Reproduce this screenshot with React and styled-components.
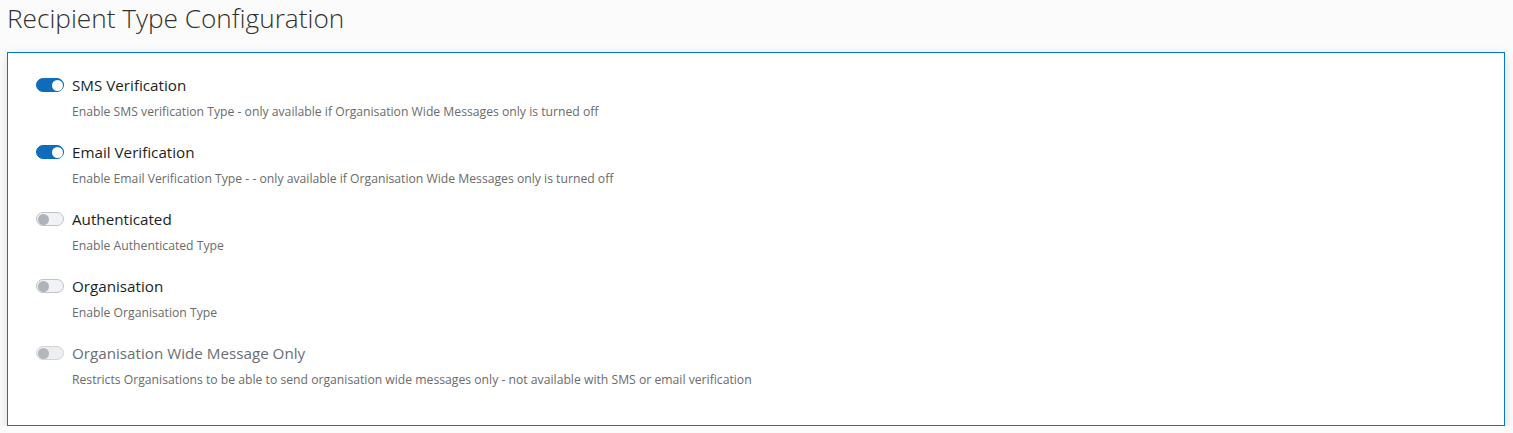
import React from "react";
import styled, { createGlobalStyle } from "styled-components";

const GlobalStyle = createGlobalStyle`
  html, body {
    margin: 0;
    padding: 0;
    background: #fbfbfb;
    font-family: "Open Sans", "Noto Sans", sans-serif;
  }
`;

const Page = styled.div`
  padding: 0 8px 0 7px;
`;

const Title = styled.h1`
  margin: 0;
  padding: 2px 0 0 0;
  height: 52px;
  box-sizing: border-box;
  font-size: 26.2px;
  font-weight: 300;
  color: #323130;
  line-height: 32px;
`;

const Card = styled.div`
  width: 1498px;
  height: 374px;
  box-sizing: border-box;
  background: #fff;
  border: 1px solid #0078d4;
  box-shadow: 0 3px 10px rgba(0, 0, 0, 0.13);
  padding: 22px 28px 24px;
  display: flex;
  flex-direction: column;
  gap: 21px;
`;

const Setting = styled.div`
  display: flex;
  flex-direction: column;
  gap: 8px;
`;

const Head = styled.div`
  display: flex;
  align-items: center;
  gap: 8px;
  height: 20px;
`;

const Switch = styled.span`
  position: relative;
  width: 28px;
  height: 14px;
  box-sizing: border-box;
  border-radius: 7px;
  background: ${({ on, disabled }) => (on ? "#0f6cbd" : disabled ? "#eceef0" : "#f1f2f3")};
  border: 1px solid ${({ on, disabled }) => (on ? "#0f6cbd" : disabled ? "#d3d5d8" : "#bfc3c7")};
  flex: none;

  &::after {
    content: "";
    position: absolute;
    top: 0.5px;
    left: ${({ on }) => (on ? "14.5px" : "0.5px")};
    width: 11px;
    height: 11px;
    border-radius: 50%;
    background: ${({ on, disabled }) => (on ? "#fff" : disabled ? "#b3b7bc" : "#aeb3b9")};
  }
`;

const Label = styled.span`
  font-size: 15.2px;
  color: ${({ disabled }) => (disabled ? "#6b6e72" : "#201f1e")};
`;

const Desc = styled.div`
  padding-left: 36px;
  font-size: 12.2px;
  color: #6b6b6b;
  line-height: 18px;
`;

const settings = [
  {
    label: "SMS Verification",
    desc: "Enable SMS verification Type - only available if Organisation Wide Messages only is turned off",
    on: true,
  },
  {
    label: "Email Verification",
    desc: "Enable Email Verification Type - - only available if Organisation Wide Messages only is turned off",
    on: true,
  },
  { label: "Authenticated", desc: "Enable Authenticated Type", on: false },
  { label: "Organisation", desc: "Enable Organisation Type", on: false },
  {
    label: "Organisation Wide Message Only",
    desc: "Restricts Organisations to be able to send organisation wide messages only - not available with SMS or email verification",
    on: false,
    disabled: true,
  },
];

export default function App() {
  return (
    <Page>
      <GlobalStyle />
      <Title>Recipient Type Configuration</Title>
      <Card>
        {settings.map((s) => (
          <Setting key={s.label}>
            <Head>
              <Switch on={s.on} disabled={s.disabled} />
              <Label disabled={s.disabled}>{s.label}</Label>
            </Head>
            <Desc>{s.desc}</Desc>
          </Setting>
        ))}
      </Card>
    </Page>
  );
}
